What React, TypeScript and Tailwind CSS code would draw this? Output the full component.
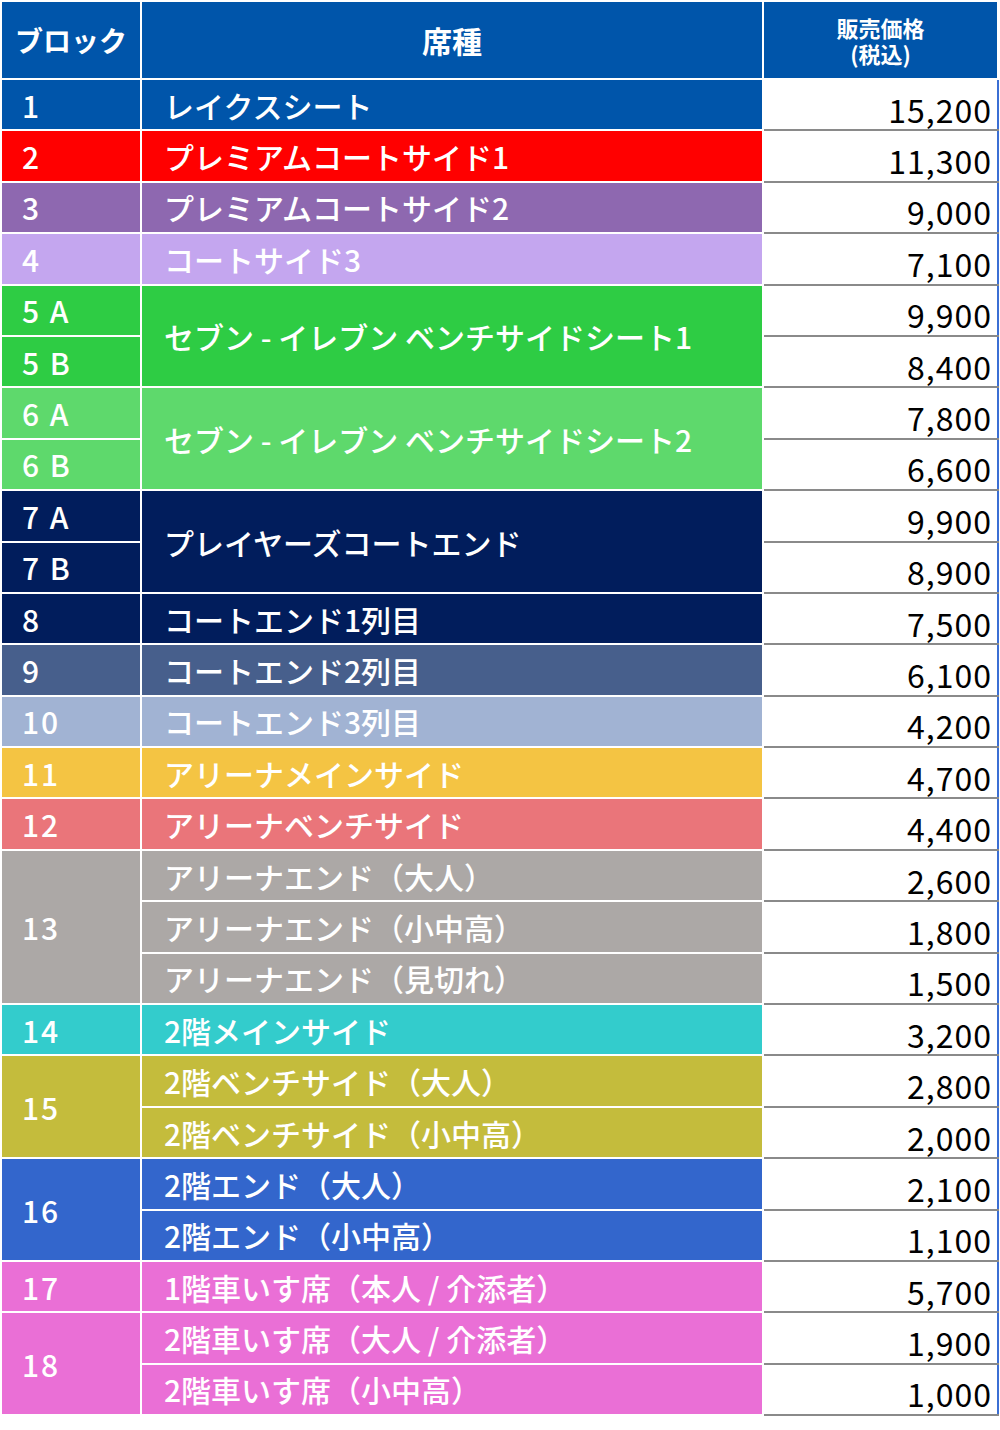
import React from 'react';

type Row = { block?: string; bs?: number; seat?: string; ss?: number; price: string; bg: string };

const rows: Row[] = [
  { block: '1', seat: 'レイクスシート', price: '15,200', bg: 'bg-[#0055aa]' },
  { block: '2', seat: 'プレミアムコートサイド1', price: '11,300', bg: 'bg-[#ff0000]' },
  { block: '3', seat: 'プレミアムコートサイド2', price: '9,000', bg: 'bg-[#8e68b0]' },
  { block: '4', seat: 'コートサイド3', price: '7,100', bg: 'bg-[#c4a6ef]' },
  { block: '5 A', seat: 'セブン - イレブン ベンチサイドシート1', ss: 2, price: '9,900', bg: 'bg-[#2ecc44]' },
  { block: '5 B', price: '8,400', bg: 'bg-[#2ecc44]' },
  { block: '6 A', seat: 'セブン - イレブン ベンチサイドシート2', ss: 2, price: '7,800', bg: 'bg-[#5ed96c]' },
  { block: '6 B', price: '6,600', bg: 'bg-[#5ed96c]' },
  { block: '7 A', seat: 'プレイヤーズコートエンド', ss: 2, price: '9,900', bg: 'bg-[#011d5c]' },
  { block: '7 B', price: '8,900', bg: 'bg-[#011d5c]' },
  { block: '8', seat: 'コートエンド1列目', price: '7,500', bg: 'bg-[#011d5c]' },
  { block: '9', seat: 'コートエンド2列目', price: '6,100', bg: 'bg-[#475f8c]' },
  { block: '10', seat: 'コートエンド3列目', price: '4,200', bg: 'bg-[#a1b3d3]' },
  { block: '11', seat: 'アリーナメインサイド', price: '4,700', bg: 'bg-[#f4c443]' },
  { block: '12', seat: 'アリーナベンチサイド', price: '4,400', bg: 'bg-[#ea757a]' },
  { block: '13', bs: 3, seat: 'アリーナエンド（大人）', price: '2,600', bg: 'bg-[#aca8a6]' },
  { seat: 'アリーナエンド（小中高）', price: '1,800', bg: 'bg-[#aca8a6]' },
  { seat: 'アリーナエンド（見切れ）', price: '1,500', bg: 'bg-[#aca8a6]' },
  { block: '14', seat: '2階メインサイド', price: '3,200', bg: 'bg-[#33cccc]' },
  { block: '15', bs: 2, seat: '2階ベンチサイド（大人）', price: '2,800', bg: 'bg-[#c4bc3c]' },
  { seat: '2階ベンチサイド（小中高）', price: '2,000', bg: 'bg-[#c4bc3c]' },
  { block: '16', bs: 2, seat: '2階エンド（大人）', price: '2,100', bg: 'bg-[#3366cc]' },
  { seat: '2階エンド（小中高）', price: '1,100', bg: 'bg-[#3366cc]' },
  { block: '17', seat: '1階車いす席（本人 / 介添者）', price: '5,700', bg: 'bg-[#ea6fd6]' },
  { block: '18', bs: 3, seat: '2階車いす席（大人 / 介添者）', price: '1,900', bg: 'bg-[#ea6fd6]' },
  { seat: '2階車いす席（小中高）', price: '1,000', bg: 'bg-[#ea6fd6]' },
];

export default function App() {
  return (
    <div className="bg-white w-[1000px] h-[1430px]" style={{ fontFamily: '"Noto Sans CJK JP", "Noto Sans", sans-serif' }}>
      <table className="w-[997px] border-collapse border-2 border-[#3b6fd4] table-fixed">
        <colgroup>
          <col className="w-[140px]" />
          <col className="w-[622px]" />
          <col className="w-[235px]" />
        </colgroup>
        <thead>
          <tr className="h-[78px] bg-[#0055aa] text-white">
            <th className="border-2 border-white text-[28px] font-bold">ブロック</th>
            <th className="border-2 border-white text-[30px] font-bold">席種</th>
            <th className="border-2 border-white text-[22px] font-bold">
              <div className="leading-[26px]">販売価格</div>
              <div className="leading-[26px]">(税込)</div>
            </th>
          </tr>
        </thead>
        <tbody>
          {rows.map((r, i) => (
            <tr key={i} className="h-[51.4px]">
              {r.block !== undefined && (
                <td rowSpan={r.bs ?? 1} className={`${r.bg} border-2 border-white text-white text-[30px] font-medium leading-none pl-[20px] tracking-[2px] py-0`}>
                  {r.block}
                </td>
              )}
              {r.seat !== undefined && (
                <td rowSpan={r.ss ?? 1} className={`${r.bg} border-2 border-white text-white text-[30px] font-medium leading-none pl-[22px] py-0 whitespace-nowrap`}>
                  {r.seat}
                </td>
              )}
              <td className="bg-white border-b-2 border-[#8a8a8a] text-black text-[32px] tracking-[1px] leading-none text-right pr-[5px] pt-[8px] font-['Liberation_Sans',sans-serif]">
                {r.price}
              </td>
            </tr>
          ))}
        </tbody>
      </table>
    </div>
  );
}
